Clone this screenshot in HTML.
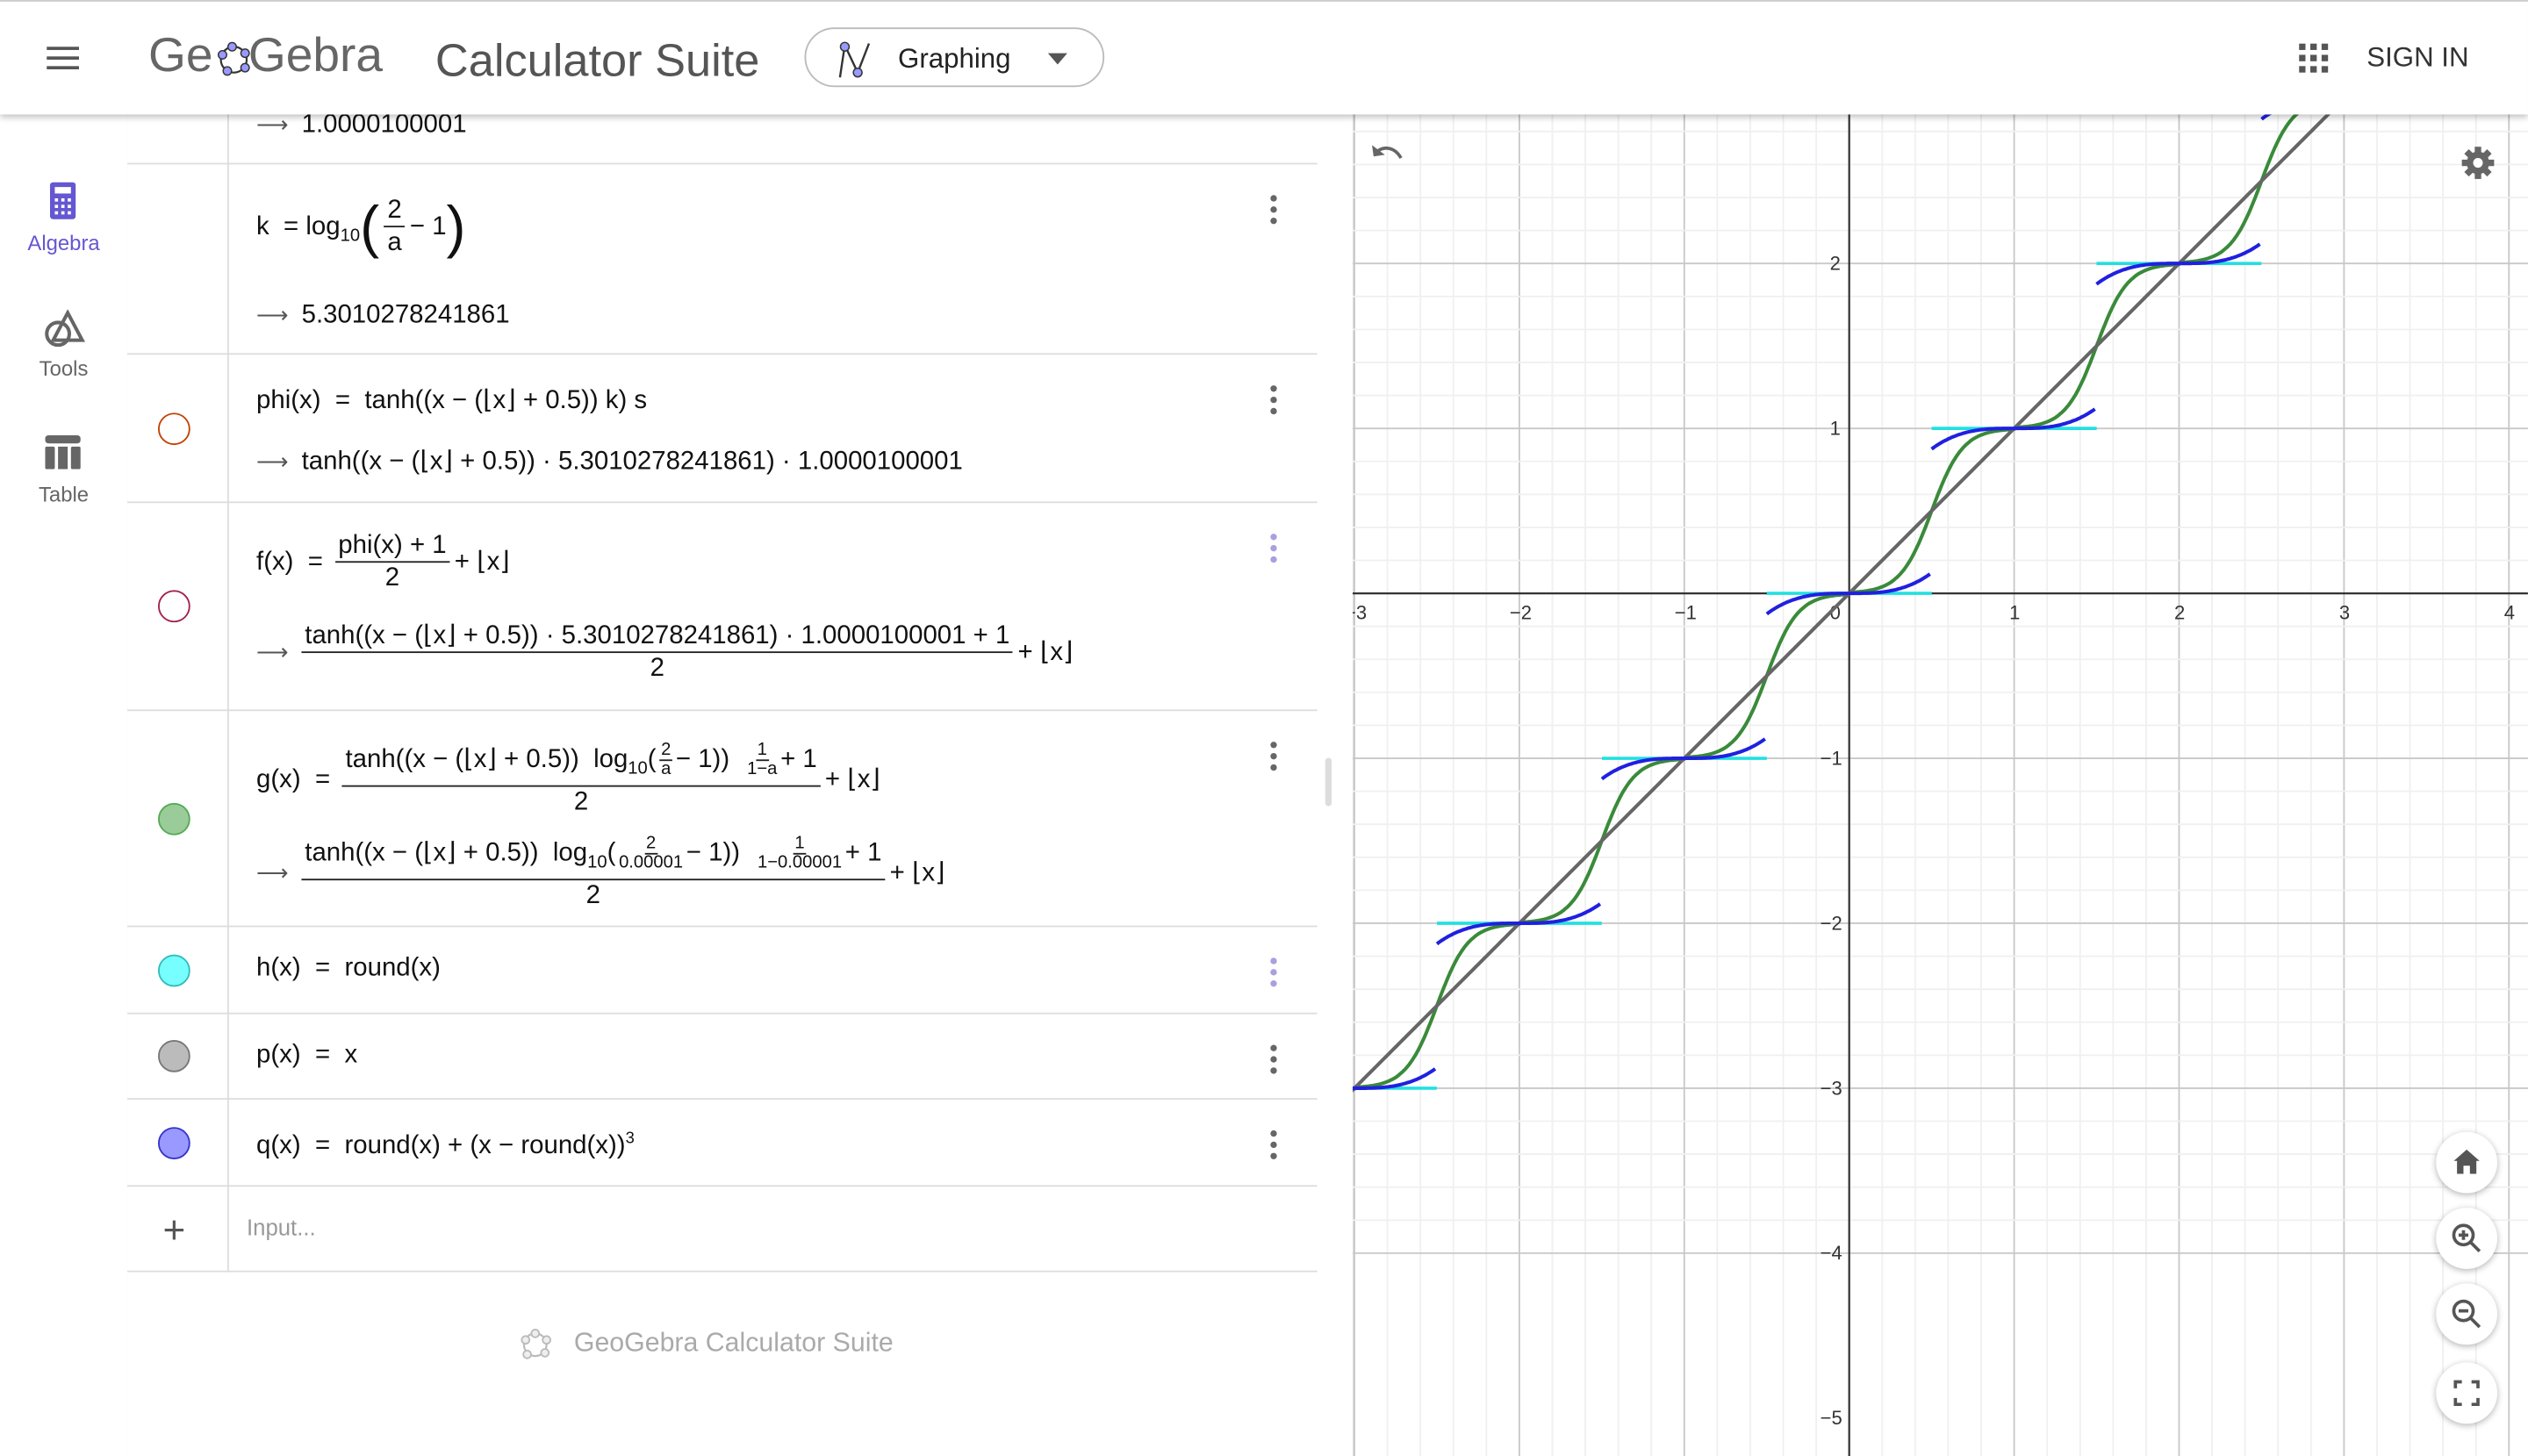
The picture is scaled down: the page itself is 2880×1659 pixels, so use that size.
<!DOCTYPE html>
<html><head><meta charset="utf-8">
<style>
html,body{margin:0;padding:0;width:2880px;height:1659px;overflow:hidden;background:#fff}
#w{position:absolute;left:0;top:0;width:1568px;height:903px;transform:scale(1.8367,1.8372);transform-origin:0 0;font-family:"Liberation Sans",sans-serif;color:#000}
.abs{position:absolute}
.m{font-family:"Liberation Sans",sans-serif;font-size:16px;color:#111;white-space:nowrap}
.fr{display:inline-flex;flex-direction:column;align-items:center;vertical-align:middle;margin:0 3px}
.fr>span:first-child{border-bottom:1px solid #222;padding:0 2px;line-height:19px}
.fr>span:last-child{line-height:20px}
.sfr{display:inline-flex;flex-direction:column;align-items:center;vertical-align:middle;font-size:11px;margin:0 2px}
.sfr>span:first-child{border-bottom:1px solid #222;line-height:11px;padding:0 1px}
.sfr>span:last-child{line-height:11px}
.row{position:absolute;left:79px;width:738px;border-bottom:1px solid #ddd}
.dots{position:absolute;left:788px;width:4px}
.dots i{display:block;width:4px;height:4px;border-radius:2px;background:#666;margin-bottom:3px}
.circ{position:absolute;left:98px;width:20px;height:20px;border-radius:50%;box-sizing:border-box}
.arr{color:#555;font-size:14px;margin-right:8px}
sub{font-size:11px}
.btn{position:absolute;left:1511px;width:38px;height:38px;border-radius:50%;background:#fff;box-shadow:0 1px 4px rgba(0,0,0,.3)}
</style></head><body>
<div id="w">
<!-- header -->
<div class="abs" style="left:0;top:0;width:1568px;height:70px;background:#fff;border-top:1px solid #ccc;box-shadow:0 2px 4px rgba(0,0,0,.25);z-index:5">
 <div class="abs" style="left:29px;top:28px;width:20px;height:2px;background:#555;box-shadow:0 6px 0 #555,0 12px 0 #555"></div>
 <div class="abs" style="left:92px;top:17px;font-size:30px;color:#666;letter-spacing:0px;white-space:nowrap">Ge<span style="display:inline-block;width:22px"></span>Gebra</div>
 <svg class="abs" style="left:132px;top:24px" width="26" height="24"><circle cx="13" cy="12" r="8" fill="none" stroke="#333" stroke-width="1.2"/><g fill="#99f" stroke="#333" stroke-width=".8"><circle cx="6" cy="9" r="2.6"/><circle cx="12" cy="4" r="2.6"/><circle cx="20" cy="8" r="2.6"/><circle cx="20" cy="17" r="2.6"/><circle cx="9" cy="19" r="2.6"/></g></svg>
 <div class="abs" style="left:270px;top:21px;font-size:28.5px;color:#555;white-space:nowrap">Calculator Suite</div>
 <div class="abs" style="left:499px;top:16px;width:186px;height:37px;border:1px solid #bbb;border-radius:19px;box-sizing:border-box">
  <svg class="abs" style="left:18px;top:7px" width="26" height="24"><path d="M3 23 L6 3 L14 20 L21 2" fill="none" stroke="#333" stroke-width="1.3"/><circle cx="6" cy="4" r="2.7" fill="#99f" stroke="#333" stroke-width=".8"/><circle cx="14" cy="20" r="2.7" fill="#99f" stroke="#333" stroke-width=".8"/></svg>
  <div class="abs" style="left:57px;top:9px;font-size:17px;color:#222">Graphing</div>
  <div class="abs" style="left:150px;top:15px;width:0;height:0;border-left:6px solid transparent;border-right:6px solid transparent;border-top:7px solid #555"></div>
 </div>
 <svg class="abs" style="left:1426px;top:26px" width="20" height="20" fill="#555"><rect x="0" y="0" width="4" height="4"/><rect x="7" y="0" width="4" height="4"/><rect x="14" y="0" width="4" height="4"/><rect x="0" y="7" width="4" height="4"/><rect x="7" y="7" width="4" height="4"/><rect x="14" y="7" width="4" height="4"/><rect x="0" y="14" width="4" height="4"/><rect x="7" y="14" width="4" height="4"/><rect x="14" y="14" width="4" height="4"/></svg>
 <div class="abs" style="left:1468px;top:25px;font-size:17px;color:#333">SIGN IN</div>
</div>
<!-- sidebar -->
<div class="abs" style="left:0;top:70px;width:79px;height:833px;background:#fff;border-right:1px solid #ddd;box-shadow:1px 0 3px rgba(0,0,0,.1)"></div>
<svg class="abs" style="left:31px;top:113px" width="16" height="23"><rect x="0" y="0" width="16" height="23" rx="2" fill="#6557d2"/><rect x="3" y="3" width="10" height="4" fill="#fff"/><g fill="#fff"><rect x="3" y="10" width="2" height="2"/><rect x="7" y="10" width="2" height="2"/><rect x="11" y="10" width="2" height="2"/><rect x="3" y="14" width="2" height="2"/><rect x="7" y="14" width="2" height="2"/><rect x="11" y="14" width="2" height="2"/><rect x="3" y="18" width="2" height="2"/><rect x="7" y="18" width="2" height="2"/><rect x="11" y="18" width="2" height="2"/></g></svg>
<div class="abs" style="left:0;top:143px;width:79px;text-align:center;font-size:13px;color:#6557d2">Algebra</div>
<svg class="abs" style="left:27px;top:192px" width="26" height="24"><circle cx="9" cy="15" r="7" fill="none" stroke="#666" stroke-width="2.2"/><path d="M15 2 L24 19 L6 19 Z" fill="none" stroke="#666" stroke-width="2.2"/></svg>
<div class="abs" style="left:0;top:221px;width:79px;text-align:center;font-size:13px;color:#666">Tools</div>
<svg class="abs" style="left:28px;top:270px" width="22" height="21"><rect x="0" y="0" width="22" height="5" rx="2" fill="#666"/><rect x="0" y="7" width="6" height="14" rx="1" fill="#666"/><rect x="8" y="7" width="6" height="14" fill="#666"/><rect x="16" y="7" width="6" height="14" rx="1" fill="#666"/></svg>
<div class="abs" style="left:0;top:299px;width:79px;text-align:center;font-size:13px;color:#666">Table</div>
<div class="abs" style="left:82px;top:878px;width:33px;height:22px;background:#666;border-radius:3px"></div>
<!-- algebra panel -->
<div class="abs" style="left:79px;top:70px;width:760px;height:833px;background:#fff;border-right:1px solid #ddd"></div>
<div class="abs" style="left:141px;top:70px;width:1px;height:719px;background:#ddd"></div>
<div class="row" style="top:70px;height:31px"></div>
<div class="abs m" style="left:159px;top:69px"><span class="arr">⟶</span>1.0000100001</div>
<div class="row" style="top:102px;height:117px"></div>
<div class="abs m" style="left:159px;top:120px">k &nbsp;= log<sub>10</sub><span style="font-size:36px;font-weight:100;vertical-align:middle">(</span><span class="fr"><span>2</span><span>a</span></span>− 1<span style="font-size:36px;font-weight:100;vertical-align:middle">)</span></div>
<div class="abs m" style="left:159px;top:187px"><span class="arr">⟶</span>5.3010278241861</div>
<div class="dots" style="top:121px"><i></i><i></i><i></i></div>
<div class="row" style="top:220px;height:91px"></div>
<div class="circ" style="top:256px;border:1.5px solid #c04000"></div>
<div class="abs m" style="left:159px;top:238px">phi(x) &nbsp;= &nbsp;tanh((x − (⌊x⌋ + 0.5)) k) s</div>
<div class="abs m" style="left:159px;top:276px"><span class="arr">⟶</span>tanh((x − (⌊x⌋ + 0.5)) · 5.3010278241861) · 1.0000100001</div>
<div class="dots" style="top:239px"><i></i><i></i><i></i></div>
<div class="row" style="top:312px;height:128px"></div>
<div class="circ" style="top:366px;border:1.5px solid #a02050"></div>
<div class="abs m" style="left:159px;top:329px">f(x) &nbsp;= <span class="fr"><span>phi(x) + 1</span><span>2</span></span>+ ⌊x⌋</div>
<div class="abs m" style="left:159px;top:385px"><span class="arr">⟶</span><span class="fr" style="margin-left:0"><span>tanh((x − (⌊x⌋ + 0.5)) · 5.3010278241861) · 1.0000100001 + 1</span><span>2</span></span>+ ⌊x⌋</div>
<div class="dots" style="top:331px"><i style="background:#a9a0e0"></i><i style="background:#a9a0e0"></i><i style="background:#a9a0e0"></i></div>
<div class="row" style="top:441px;height:133px"></div>
<div class="circ" style="top:498px;background:#9c9;border:1.5px solid #5a5"></div>
<div class="abs m" style="left:159px;top:460px">g(x) &nbsp;= <span class="fr"><span>tanh((x − (⌊x⌋ + 0.5)) &nbsp;log<sub>10</sub>(<span class="sfr"><span>2</span><span>a</span></span>− 1)) &nbsp;<span class="sfr"><span>1</span><span>1−a</span></span>+ 1</span><span>2</span></span>+ ⌊x⌋</div>
<div class="abs m" style="left:159px;top:518px"><span class="arr">⟶</span><span class="fr" style="margin-left:0"><span>tanh((x − (⌊x⌋ + 0.5)) &nbsp;log<sub>10</sub>(<span class="sfr"><span>2</span><span>0.00001</span></span>− 1)) &nbsp;<span class="sfr"><span>1</span><span>1−0.00001</span></span>+ 1</span><span>2</span></span>+ ⌊x⌋</div>
<div class="dots" style="top:460px"><i></i><i></i><i></i></div>
<div class="row" style="top:575px;height:53px"></div>
<div class="circ" style="top:592px;background:#7ff;border:1.5px solid #3bb"></div>
<div class="abs m" style="left:159px;top:592px">h(x) &nbsp;= &nbsp;round(x)</div>
<div class="dots" style="top:594px"><i style="background:#a9a0e0"></i><i style="background:#a9a0e0"></i><i style="background:#a9a0e0"></i></div>
<div class="row" style="top:629px;height:52px"></div>
<div class="circ" style="top:645px;background:#bbb;border:1.5px solid #777"></div>
<div class="abs m" style="left:159px;top:646px">p(x) &nbsp;= &nbsp;x</div>
<div class="dots" style="top:648px"><i></i><i></i><i></i></div>
<div class="row" style="top:682px;height:53px"></div>
<div class="circ" style="top:699px;background:#99f;border:1.5px solid #33c"></div>
<div class="abs m" style="left:159px;top:701px">q(x) &nbsp;= &nbsp;round(x) + (x − round(x))<sup style="font-size:10px">3</sup></div>
<div class="dots" style="top:701px"><i></i><i></i><i></i></div>
<div class="row" style="top:736px;height:52px"></div>
<div class="abs" style="left:101px;top:750px;font-size:24px;color:#555;font-weight:300">+</div>
<div class="abs" style="left:153px;top:753px;font-size:14px;color:#999">Input...</div>
<svg class="abs" style="left:320px;top:823px" width="24" height="22"><circle cx="12" cy="11" r="7" fill="none" stroke="#bbb" stroke-width="1.2"/><g fill="#eee" stroke="#bbb"><circle cx="6" cy="8" r="2.4"/><circle cx="12" cy="4" r="2.4"/><circle cx="19" cy="8" r="2.4"/><circle cx="18" cy="16" r="2.4"/><circle cx="7" cy="17" r="2.4"/></g></svg>
<div class="abs" style="left:356px;top:824px;font-size:16.5px;color:#aaa;white-space:nowrap">GeoGebra Calculator Suite</div>
<div class="abs" style="left:822px;top:470px;width:4px;height:30px;border-radius:2px;background:#ddd"></div>
<!-- graph -->
<svg class="abs" id="g" style="left:839px;top:70px" width="729" height="833"></svg>
<svg class="abs" style="left:848px;top:86px" width="24" height="20"><path d="M5 9 C10 4,17 5,21 12" fill="none" stroke="#666" stroke-width="2"/><path d="M3 4 L4 11 L11 10 Z" fill="#666"/></svg>
<svg class="abs" style="left:1526px;top:90px" width="22" height="22"><g fill="#666" transform="translate(11,11)"><circle r="7"/><rect x="-2" y="-10" width="4" height="20"/><rect x="-2" y="-10" width="4" height="20" transform="rotate(45)"/><rect x="-2" y="-10" width="4" height="20" transform="rotate(90)"/><rect x="-2" y="-10" width="4" height="20" transform="rotate(135)"/><circle r="3" fill="#fff"/></g></svg>
<div class="btn" style="top:702px"><svg width="38" height="38"><path d="M19 11 L11 18 L13 18 L13 26 L17 26 L17 21 L21 21 L21 26 L25 26 L25 18 L27 18 Z" fill="#555"/></svg></div>
<div class="btn" style="top:749px"><svg width="38" height="38"><circle cx="17" cy="17" r="6" fill="none" stroke="#555" stroke-width="2"/><path d="M21 21 L27 27 M14 17 H20 M17 14 V20" stroke="#555" stroke-width="2"/></svg></div>
<div class="btn" style="top:796px"><svg width="38" height="38"><circle cx="17" cy="17" r="6" fill="none" stroke="#555" stroke-width="2"/><path d="M21 21 L27 27 M14 17 H20" stroke="#555" stroke-width="2"/></svg></div>
<div class="btn" style="top:845px"><svg width="38" height="38"><path d="M12 16 V12 H16 M22 12 H26 V16 M26 22 V26 H22 M16 26 H12 V22" fill="none" stroke="#555" stroke-width="2"/></svg></div>
</div>
<script>
(function(){
var s=document.getElementById('g');
var ox=1147-839,oy=368-70,u=102.3,W=729,H=833,h='';
function X(x){return ox+x*u}function Y(y){return oy-y*u}
for(var i=-20;i<=40;i++){var x=ox+i*u/5;if(x<0||x>W)continue;h+='<line x1="'+x+'" y1="0" x2="'+x+'" y2="'+H+'" stroke="'+(i%5?'#f0f0f0':'#c8c8c8')+'" stroke-width="1"/>';}
for(var i=-40;i<=20;i++){var y=oy+i*u/5;if(y<0||y>H)continue;h+='<line x1="0" y1="'+y+'" x2="'+W+'" y2="'+y+'" stroke="'+(i%5?'#f0f0f0':'#c8c8c8')+'" stroke-width="1"/>';}
h+='<line x1="0" y1="'+oy+'" x2="'+W+'" y2="'+oy+'" stroke="#333" stroke-width="1.2"/><line x1="'+ox+'" y1="0" x2="'+ox+'" y2="'+H+'" stroke="#333" stroke-width="1.2"/>';
for(var n=-3;n<=4;n++){if(n==0)continue;h+='<text x="'+(X(n)-(n<0?6:3))+'" y="'+(oy+16)+'" font-size="12" fill="#333" font-family="Liberation Sans">'+(n<0?'−'+(-n):n)+'</text>';}
h+='<text x="'+(ox-12)+'" y="'+(oy+16)+'" font-size="12" fill="#333" font-family="Liberation Sans">0</text>';
for(var n=-5;n<=2;n++){if(n==0)continue;h+='<text x="'+(ox-(n<0?18:12))+'" y="'+(Y(n)+4)+'" font-size="12" fill="#333" font-family="Liberation Sans">'+(n<0?'−'+(-n):n)+'</text>';}
function path(f,a,b,c,w){var d='';for(var x=a;x<=b+1e-9;x+=0.01){var y=f(x);d+=(d?'L':'M')+X(x).toFixed(1)+' '+Y(y).toFixed(1);}return '<path d="'+d+'" fill="none" stroke="'+c+'" stroke-width="'+w+'"/>';}
var k=5.3010278241861;
for(var n=-3;n<=3;n++){h+=path(function(){return n},n-0.5,n+0.5,'#22e0e0',2);}
h+=path(function(x){var f=Math.floor(x);return (Math.tanh((x-f-0.5)*k)*1.00001+1)/2+f},-3.1,3.2,'#3a8a3a',2.2);
h+=path(function(x){return x},-3.1,3.2,'#666',2.2);
for(var n=-3;n<=3;n++){h+=path(function(x){var r=x-n;return n+r*r*r},n-0.5,n+0.49,'#2020e0',2.2);}
s.innerHTML=h;
})();
</script>
</body></html>
